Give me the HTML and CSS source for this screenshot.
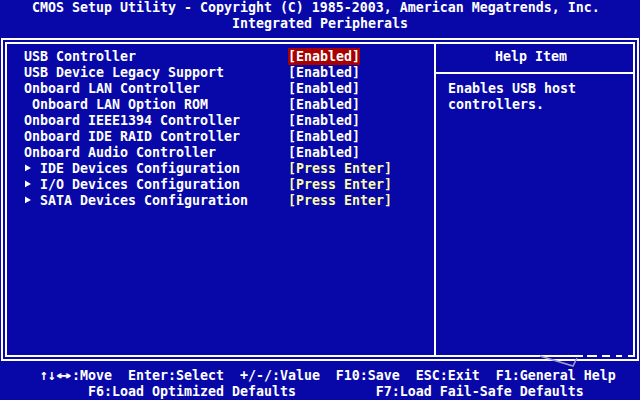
FILE: index.html
```html
<!DOCTYPE html>
<html>
<head>
<meta charset="utf-8">
<link rel="stylesheet" href="styles.css">
</head>
<body>
<div class="screen">
  <div class="title">
    <div class="line col4"><span class="t">CMOS Setup Utility - Copyright (C) 1985-2003, American Megatrends, Inc.</span></div>
    <div class="line col29"><span class="t">Integrated Peripherals</span></div>
  </div>
  <div class="frame-area">
    <div class="frame">
      <div class="menu">
        <div class="row"><span class="label t">USB Controller</span><span class="value sel"><span class="t">[Enabled]</span></span></div>
        <div class="row"><span class="label t">USB Device Legacy Support</span><span class="value t">[Enabled]</span></div>
        <div class="row"><span class="label t">Onboard LAN Controller</span><span class="value t">[Enabled]</span></div>
        <div class="row"><span class="label t indent">Onboard LAN Option ROM</span><span class="value t">[Enabled]</span></div>
        <div class="row"><span class="label t">Onboard IEEE1394 Controller</span><span class="value t">[Enabled]</span></div>
        <div class="row"><span class="label t">Onboard IDE RAID Controller</span><span class="value t">[Enabled]</span></div>
        <div class="row"><span class="label t">Onboard Audio Controller</span><span class="value t">[Enabled]</span></div>
        <div class="row"><span class="label t"><span class="arrow"></span>IDE Devices Configuration</span><span class="value t sub">[Press Enter]</span></div>
        <div class="row"><span class="label t"><span class="arrow"></span>I/O Devices Configuration</span><span class="value t sub">[Press Enter]</span></div>
        <div class="row"><span class="label t"><span class="arrow"></span>SATA Devices Configuration</span><span class="value t sub">[Press Enter]</span></div>
      </div>
      <div class="help">
        <div class="help-head"><span class="t">Help Item</span></div>
        <div class="help-body"><div class="t">Enables USB host</div><div class="t">controllers.</div></div>
      </div>
    </div>
    <svg class="scratch" width="640" height="400" viewBox="0 0 640 400">
      <rect x="583" y="354" width="4" height="4" fill="#0808a8"/>
      <rect x="597" y="354" width="5" height="4" fill="#0808a8"/>
      <rect x="610" y="354" width="6" height="4" fill="#0808a8"/>
      <rect x="622" y="354" width="6" height="4" fill="#0808a8"/>
      <polyline points="540,356 573,366 577,358" fill="none" stroke="#a39ccb" stroke-width="1.5"/>
    </svg>
  </div>
  <div class="footer">
    <div class="line col5"><span class="t">↑↓<span class="wide">↔</span>:Move  Enter:Select  +/-/:Value  F10:Save  ESC:Exit  F1:General Help</span></div>
    <div class="line col11"><span class="t">F6:Load Optimized Defaults          F7:Load Fail-Safe Defaults</span></div>
  </div>
</div>
</body>
</html>
```

FILE: styles.css
```css
html, body {
  margin: 0;
  padding: 0;
  background: #0808a8;
}

.screen {
  width: 640px;
  height: 400px;
  overflow: hidden;
  background: #0808a8;
  color: #ffffff;
  font-family: "DejaVu Sans Mono", "Liberation Mono", monospace;
  font-weight: bold;
  font-size: 13.29px;
  line-height: 16px;
  position: relative;
}

.t {
  display: inline-block;
  transform: scaleY(1.12);
  white-space: pre;
}

.line {
  height: 16px;
  white-space: pre;
}

.col4 { padding-left: 32px; }
.col5 { padding-left: 40px; }
.col11 { padding-left: 88px; }
.col29 { padding-left: 232px; }

.title {
  height: 32px;
}

.frame-area {
  height: 336px;
  padding: 6px 1px 7px 1px;
  box-sizing: border-box;
}

.frame {
  height: 100%;
  box-sizing: border-box;
  border: 6px double #ffffff;
  display: flex;
}

.menu {
  width: 429px;
  border-right: 2px solid #ffffff;
  padding-top: 5px;
  padding-left: 17px;
  box-sizing: border-box;
  flex: none;
}

.row {
  display: grid;
  grid-template-columns: 264px auto;
  height: 16px;
  white-space: pre;
}

.label.indent { padding-left: 8px; }

.value { justify-self: start; }

.value.sel {
  background: #a80000;
  margin-top: -1px;
  padding-top: 1px;
  height: 16px;
}

.value.sub {
  color: #fcfcac;
}

.arrow {
  display: inline-block;
  width: 16px;
  height: 16px;
  vertical-align: top;
  position: relative;
}

.arrow::before {
  content: "";
  position: absolute;
  left: 1px;
  top: 4px;
  border-left: 6px solid #ffffff;
  border-top: 3.5px solid transparent;
  border-bottom: 3.5px solid transparent;
}

.help {
  flex: 1;
  display: flex;
  flex-direction: column;
}

.help-head {
  padding-top: 5px;
  padding-left: 59px;
  height: 30px;
  box-sizing: border-box;
  border-bottom: 2px solid #ffffff;
  flex: none;
}

.help-body {
  padding-top: 7px;
  padding-left: 12px;
}

.help-body .t {
  display: block;
  height: 16px;
}

.scratch {
  position: absolute;
  left: 0;
  top: 0;
  pointer-events: none;
}

.footer {
  height: 32px;
}

.wide {
  display: inline-block;
  width: 16px;
  text-align: center;
  transform: scaleX(1.9);
}
```
